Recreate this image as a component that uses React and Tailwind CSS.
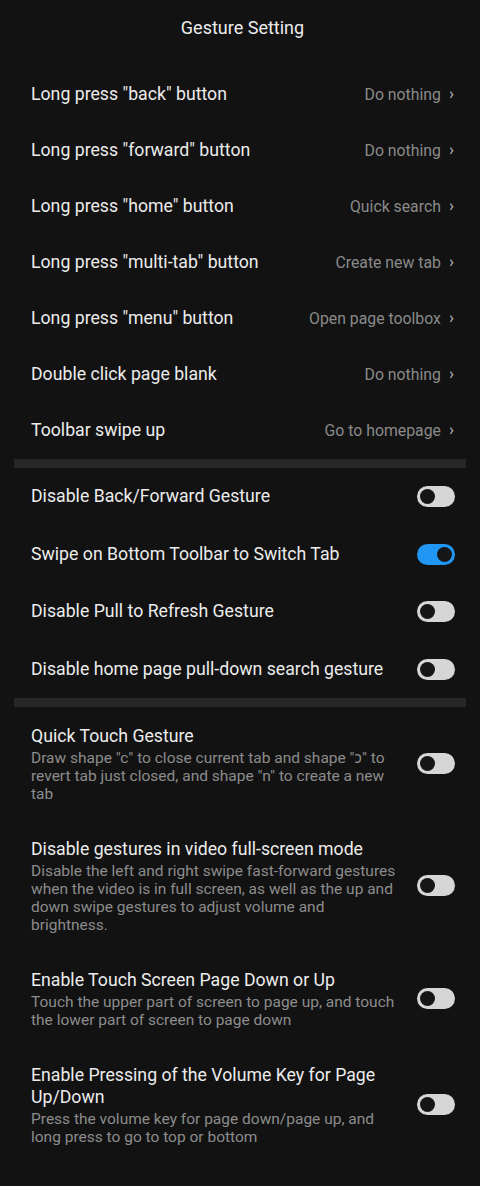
import React, { useState } from "react";

const navRows = [
  { label: 'Long press "back" button', value: "Do nothing" },
  { label: 'Long press "forward" button', value: "Do nothing" },
  { label: 'Long press "home" button', value: "Quick search" },
  { label: 'Long press "multi-tab" button', value: "Create new tab" },
  { label: 'Long press "menu" button', value: "Open page toolbox" },
  { label: "Double click page blank", value: "Do nothing" },
  { label: "Toolbar swipe up", value: "Go to homepage" },
];

const simpleToggles = [
  { label: "Disable Back/Forward Gesture", on: false },
  { label: "Swipe on Bottom Toolbar to Switch Tab", on: true },
  { label: "Disable Pull to Refresh Gesture", on: false },
  { label: "Disable home page pull-down search gesture", on: false },
];

const detailToggles = [
  {
    title: "Quick Touch Gesture",
    desc: 'Draw shape "c" to close current tab and shape "ɔ" to revert tab just closed, and shape "n" to create a new tab',
  },
  {
    title: "Disable gestures in video full-screen mode",
    desc: "Disable the left and right swipe fast-forward gestures when the video is in full screen, as well as the up and down swipe gestures to adjust volume and brightness.",
  },
  {
    title: "Enable Touch Screen Page Down or Up",
    desc: "Touch the upper part of screen to page up, and touch the lower part of screen to page down",
  },
  {
    title: "Enable Pressing of the Volume Key for Page Up/Down",
    desc: "Press the volume key for page down/page up, and long press to go to top or bottom",
  },
];

function Toggle({ initial }) {
  const [on, setOn] = useState(initial);
  return (
    <button
      onClick={() => setOn(!on)}
      className={`shrink-0 w-[38px] h-[21px] rounded-full flex items-center px-[3px] ${
        on ? "bg-[#2196f3] justify-end" : "bg-[#d6d6d6] justify-start"
      }`}
    >
      <span className="w-[15px] h-[15px] rounded-full bg-[#161616]" />
    </button>
  );
}

function Band() {
  return <div className="mx-[14px] h-[9px] bg-[#272727]" />;
}

export default function App() {
  return (
    <div
      className="min-h-[1186px] bg-[#121212] text-[#ececec]"
      style={{ fontFamily: "Roboto, 'Noto Sans', sans-serif" }}
    >
      <div className="h-[66px] flex justify-center pt-[17px]">
        <span className="text-[18px] leading-[22px] pl-[5px]">Gesture Setting</span>
      </div>

      {navRows.map((r) => (
        <div key={r.label} className="h-[56px] flex items-center pl-[31px] pr-[26px] pt-px">
          <span className="flex-1 text-[17.7px]">{r.label}</span>
          <span className="text-[15.8px] text-[#8a8a8a]">{r.value}</span>
          <span className="ml-[8px] text-[17px] text-[#b5b5b5] leading-none pb-[2px]">›</span>
        </div>
      ))}

      <div className="h-px" />
      <Band />

      {simpleToggles.map((t) => (
        <div key={t.label} className="h-[57.5px] flex items-center pl-[31px] pr-[25px]">
          <span className="flex-1 text-[17.7px]">{t.label}</span>
          <Toggle initial={t.on} />
        </div>
      ))}

      <Band />

      {detailToggles.map((t) => (
        <div key={t.title} className="flex items-center pl-[31px] pr-[25px] py-[17.5px]">
          <div className="flex-1 pr-[14px]">
            <div className="text-[17.7px] leading-[22px]">{t.title}</div>
            <div className="mt-[2px] text-[15.5px] leading-[18px] text-[#8c8c8c]">{t.desc}</div>
          </div>
          <Toggle initial={false} />
        </div>
      ))}
    </div>
  );
}
